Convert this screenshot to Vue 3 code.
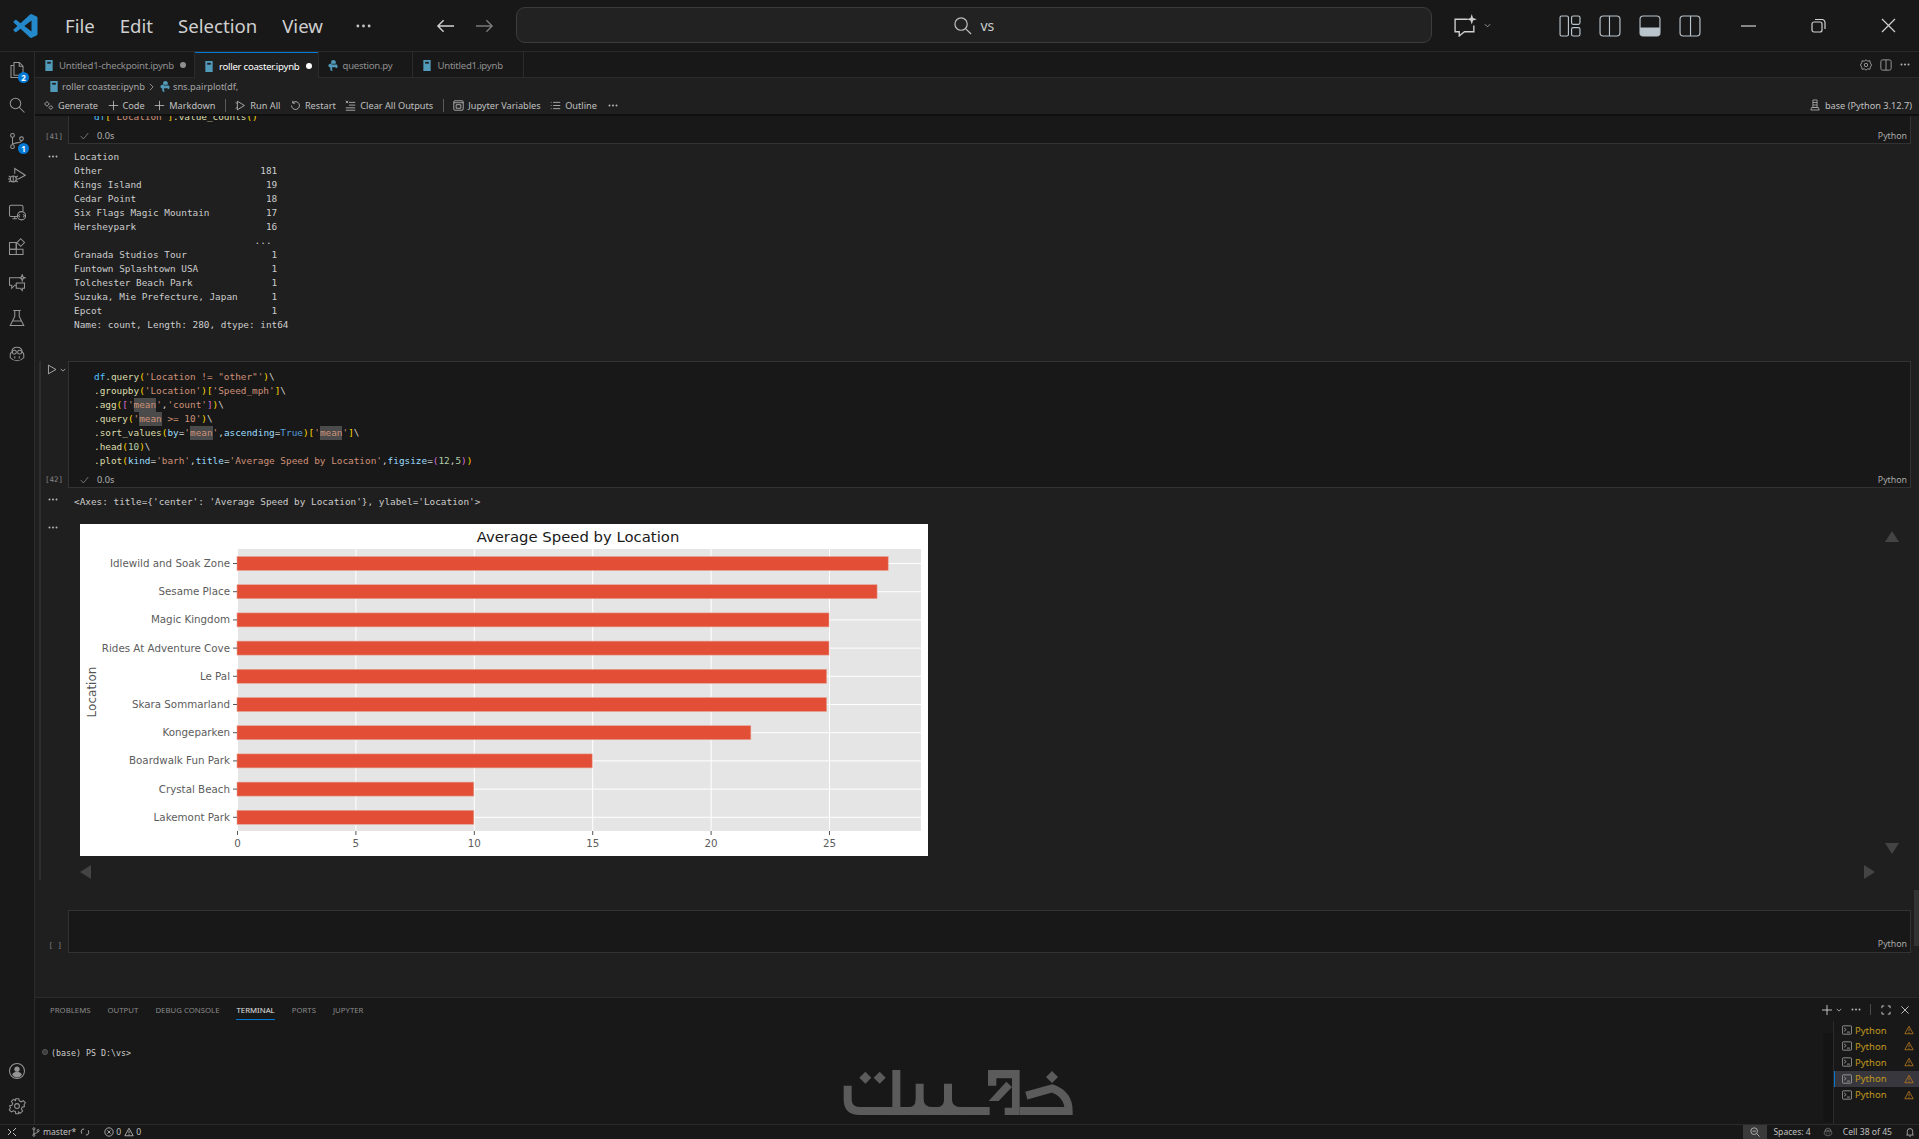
<template>
  <div class="window">
    <header class="titlebar">
      <svg class="logo" viewBox="0 0 24 24"><path fill="#2489ca" d="M23.15 2.587L18.21.21a1.494 1.494 0 0 0-1.705.29l-9.46 8.63-4.12-3.128a.999.999 0 0 0-1.276.057L.327 7.261A1 1 0 0 0 .326 8.74L3.899 12 .326 15.26a1 1 0 0 0 .001 1.479L1.65 17.94a.999.999 0 0 0 1.276.057l4.12-3.128 9.46 8.63a1.492 1.492 0 0 0 1.704.29l4.942-2.377A1.5 1.5 0 0 0 24 20.06V3.939a1.5 1.5 0 0 0-.85-1.352zm-5.146 14.861L10.826 12l7.178-5.448v10.896z"/></svg>
      <nav class="menu">
        <span>File</span><span>Edit</span><span>Selection</span><span>View</span>
      </nav>
      <svg class="dots-big" viewBox="0 0 16 4"><circle cx="2" cy="2" r="1.5"/><circle cx="8" cy="2" r="1.5"/><circle cx="14" cy="2" r="1.5"/></svg>
      <svg class="nav-arrow back" viewBox="0 0 20 16"><path d="M19 8H2M8 2L2 8l6 6"/></svg>
      <svg class="nav-arrow fwd" viewBox="0 0 20 16"><path d="M1 8h17M12 2l6 6-6 6"/></svg>
      <div class="search">
        <svg viewBox="0 0 20 20"><circle cx="8.5" cy="8.5" r="6.5"/><path d="M13.5 13.5L19 19"/></svg>
        <span>vs</span>
      </div>
      <svg class="chat-btn" viewBox="0 0 24 22"><path d="M14 5H2v12h4v4l5-4h9v-6"/><path class="solid" d="M18 0l1.2 3.8L23 5l-3.8 1.2L18 10l-1.2-3.8L13 5l3.8-1.2z"/></svg>
      <svg class="chev-mini" viewBox="0 0 8 5"><path d="M1 1l3 3 3-3"/></svg>
      <div class="layouts">
        <svg viewBox="0 0 21 21"><rect x="1" y="1" width="8" height="19" rx="1.5"/><rect x="12" y="1" width="8" height="8" rx="1.5"/><rect x="12" y="12" width="8" height="8" rx="1.5"/></svg>
        <svg viewBox="0 0 21 21"><rect x="1" y="1" width="19" height="19" rx="3"/><path d="M10 1v19"/></svg>
        <svg viewBox="0 0 21 21"><rect x="1" y="1" width="19" height="19" rx="3"/><path class="solid" d="M1 12h19v5a3 3 0 0 1-3 3H4a3 3 0 0 1-3-3z"/></svg>
        <svg viewBox="0 0 21 21"><rect x="1" y="1" width="19" height="19" rx="3"/><path d="M11 1v19"/></svg>
      </div>
      <svg class="win-btn min" viewBox="0 0 15 2"><path d="M0 1h15"/></svg>
      <svg class="win-btn restore" viewBox="0 0 15 15"><rect x="1" y="4" width="10" height="10" rx="2"/><path d="M4 1.5h7a3 3 0 0 1 3 3V11"/></svg>
      <svg class="win-btn close" viewBox="0 0 15 15"><path d="M1 1l13 13M14 1L1 14"/></svg>
    </header>

    <div class="body">
      <aside class="activity">
        <div v-for="item in activityTop" :key="item.name" class="act-slot">
          <svg viewBox="0 0 24 24" v-html="item.svg"></svg>
          <b v-if="item.badge" class="badge">{{ item.badge }}</b>
        </div>
        <div class="act-slot bottom-first">
          <svg viewBox="0 0 24 24"><circle cx="12" cy="12" r="10"/><circle cx="12" cy="9.5" r="3.5" class="solid"/><path class="solid" d="M5.5 17c1-3 4-4 6.5-4s5.5 1 6.5 4c-1.5 2-4 3.5-6.5 3.5S7 19 5.5 17z"/></svg>
        </div>
        <div class="act-slot">
          <svg viewBox="0 0 24 24"><circle cx="12" cy="12" r="3.2"/><path d="M10 2h4l.7 3 2.5 1.100 2.700-1.600 2.800 2.800-1.600 2.700L21.500 12.500l-3 .7-1 2.500 1.600 2.700-2.800 2.800-2.700-1.600L14 22h-4l-.7-3-2.500-1-2.700 1.600-2.800-2.800 1.600-2.700L1.800 11.500l3-.7 1-2.500-1.600-2.700 2.800-2.800 2.700 1.600z" transform="translate(.4 .3)"/></svg>
        </div>
      </aside>

      <main class="content">
        <div class="tabs">
          <div v-for="tab in tabs" :key="tab.name" class="tab" :class="{ active: tab.active }">
            <svg class="file-icon" viewBox="0 0 10 12" v-html="tab.py ? pyIcon : nbIcon"></svg>
            <span>{{ tab.name }}</span>
            <i class="dirty" :class="{ on: tab.dirty }"></i>
          </div>
          <div class="tab-actions">
            <svg viewBox="0 0 14 14"><circle cx="7" cy="7" r="2"/><path d="M7 1l2 1.5 2.500-.5.5 2.500L13.500 7 12 9.500l-.5 2.500L9 11.500 7 13l-2-1.500-2.500.5L2 9.500.5 7 2 4.500 2.500 2 5 2.500z"/></svg>
            <svg viewBox="0 0 14 14"><rect x="1" y="1" width="12" height="12" rx="2"/><path d="M7 1v12"/></svg>
            <svg class="dots" viewBox="0 0 10 3"><circle cx="1.5" cy="1.5" r="1"/><circle cx="5" cy="1.5" r="1"/><circle cx="8.5" cy="1.5" r="1"/></svg>
          </div>
        </div>

        <div class="crumbs">
          <svg class="file-icon" viewBox="0 0 10 12" v-html="nbIcon"></svg>
          <span>roller coaster.ipynb</span>
          <svg class="crumb-chev" viewBox="0 0 6 10"><path d="M1 1l4 4-4 4"/></svg>
          <svg class="file-icon" viewBox="0 0 10 12" v-html="pyIcon"></svg>
          <span>sns.pairplot(df,</span>
        </div>

        <div class="toolbar">
          <template v-for="item in toolbar" :key="item.label">
            <i v-if="item.sep" class="tool-sep"></i>
            <div v-else class="tool">
              <svg viewBox="0 0 14 14" v-html="item.svg"></svg>
              <span>{{ item.label }}</span>
            </div>
          </template>
          <svg class="dots tool-more" viewBox="0 0 10 3"><circle cx="1.5" cy="1.5" r="1"/><circle cx="5" cy="1.5" r="1"/><circle cx="8.5" cy="1.5" r="1"/></svg>
          <div class="kernel">
            <svg viewBox="0 0 12 14"><path d="M3.5 1h5v9h-5zM3.5 4h5M3.5 7h5M2 10h8l1 3H1z"/></svg>
            <span>base (Python 3.12.7)</span>
          </div>
        </div>

        <section class="notebook">
          <div class="cell cell-top">
            <div class="gutter"><span class="count">[41]</span></div>
            <div class="editor clipped">
              <pre class="code clipped-code"><span class="t-v">df</span><span class="t-p">[</span><span class="t-s">'Location'</span><span class="t-p">]</span><span class="t-f">.value_counts</span><span class="t-p">()</span></pre>
              <div class="exec">
                <svg viewBox="0 0 12 10"><path d="M1 5l3.5 4L11 1"/></svg>
                <span>0.0s</span>
                <em>Python</em>
              </div>
            </div>
          </div>

          <div class="out-block first-out">
            <svg class="dots out-dots" viewBox="0 0 10 3"><circle cx="1.5" cy="1.5" r="1"/><circle cx="5" cy="1.5" r="1"/><circle cx="8.5" cy="1.5" r="1"/></svg>
            <pre class="output">{{ countsOutput }}</pre>
          </div>

          <div class="focused">
            <div class="cell cell-main">
              <div class="gutter">
                <div class="run">
                  <svg viewBox="0 0 12 14"><path d="M1.5 1.5v11L11 7z"/></svg>
                  <svg class="run-chev" viewBox="0 0 8 5"><path d="M1 1l3 3 3-3"/></svg>
                </div>
                <span class="count">[42]</span>
              </div>
              <div class="editor">
                <pre class="code"><div v-for="(line, i) in codeLines" :key="i" class="code-line"><span v-for="(tok, j) in line" :key="j" :class="'t-' + tok[0]">{{ tok[1] }}</span></div></pre>
                <div class="exec">
                  <svg viewBox="0 0 12 10"><path d="M1 5l3.5 4L11 1"/></svg>
                  <span>0.0s</span>
                  <em>Python</em>
                </div>
              </div>
            </div>

            <div class="out-block axes-out">
              <svg class="dots out-dots" viewBox="0 0 10 3"><circle cx="1.5" cy="1.5" r="1"/><circle cx="5" cy="1.5" r="1"/><circle cx="8.5" cy="1.5" r="1"/></svg>
              <pre class="output">&lt;Axes: title={'center': 'Average Speed by Location'}, ylabel='Location'&gt;</pre>
            </div>

            <div class="out-block chart-out">
              <svg class="dots out-dots" viewBox="0 0 10 3"><circle cx="1.5" cy="1.5" r="1"/><circle cx="5" cy="1.5" r="1"/><circle cx="8.5" cy="1.5" r="1"/></svg>
              <svg class="chart" width="848" height="332" viewBox="0 0 848 332">
                <rect width="848" height="332" fill="#fff"/>
                <rect :x="plot.x" :y="plot.y" :width="plot.w" :height="plot.h" fill="#e5e5e5"/>
                <line v-for="t in ticks" :key="'g' + t" :x1="xPos(t)" :x2="xPos(t)" :y1="plot.y" :y2="plot.y + plot.h" stroke="#fff" stroke-width="1"/>
                <line v-for="b in bars" :key="'h' + b.name" :x1="plot.x" :x2="plot.x + plot.w" :y1="b.cy" :y2="b.cy" stroke="#fff" stroke-width="1"/>
                <g v-for="b in bars" :key="b.name">
                  <rect :x="plot.x" :y="b.cy - 7" :width="b.w" height="14" fill="#e24f36" stroke="#e5a598" stroke-width=".6"/>
                  <line :x1="plot.x - 4" :x2="plot.x" :y1="b.cy" :y2="b.cy" stroke="#555"/>
                  <text class="tick" :x="plot.x - 7" :y="b.cy + 3.5" text-anchor="end">{{ b.name }}</text>
                </g>
                <g v-for="t in ticks" :key="'t' + t">
                  <line :x1="xPos(t)" :x2="xPos(t)" :y1="plot.y + plot.h" :y2="plot.y + plot.h + 4" stroke="#555"/>
                  <text class="tick" :x="xPos(t)" y="323" text-anchor="middle">{{ t }}</text>
                </g>
                <text class="chart-title" x="498" y="18" text-anchor="middle">Average Speed by Location</text>
                <text class="axis-name" transform="translate(16 168) rotate(-90)" text-anchor="middle">Location</text>
              </svg>
              <i class="scroll-tri up"></i>
              <i class="scroll-tri down"></i>
              <i class="scroll-tri left"></i>
              <i class="scroll-tri right"></i>
            </div>
          </div>

          <div class="cell cell-empty">
            <div class="gutter"><span class="count">[ ]</span></div>
            <div class="editor"><em>Python</em></div>
          </div>
          <i class="nb-scroll"></i>
        </section>

        <section class="panel">
          <div class="panel-main">
            <div class="panel-tabs">
              <span v-for="name in panelTabs" :key="name" :class="{ current: name === 'TERMINAL' }">{{ name }}</span>
            </div>
            <div class="terminal">
              <i class="term-dot"></i>
              <pre>(base) PS D:\vs&gt;</pre>
            </div>
          </div>
          <i class="term-ruler"></i>
          <div class="panel-side">
            <div class="panel-actions">
              <svg class="plus" viewBox="0 0 12 12"><path d="M6 0v12M0 6h12"/></svg>
              <svg class="act-chev" viewBox="0 0 8 5"><path d="M1 1l3 3 3-3"/></svg>
              <svg class="dots" viewBox="0 0 10 3"><circle cx="1.5" cy="1.5" r="1"/><circle cx="5" cy="1.5" r="1"/><circle cx="8.5" cy="1.5" r="1"/></svg>
              <i class="act-sep"></i>
              <svg class="act-icon" viewBox="0 0 11 11"><path d="M1 3.5V1h2.500M7.500 1H10v2.500M10 7.500V10H7.500M3.500 10H1V7.500"/></svg>
              <svg class="act-icon" viewBox="0 0 11 11"><path d="M1.5 1.500l8 8M9.500 1.500l-8 8"/></svg>
            </div>
            <div class="term-list">
              <div v-for="n in 5" :key="n" class="term-row" :class="{ selected: n === 4 }">
                <svg class="term-icon" viewBox="0 0 12 12"><rect x=".5" y="1" width="11" height="10" rx="1"/><path d="M2.500 3.500l2.500 2-2.500 2M6 8.500h3.500"/></svg>
                <span>Python</span>
                <svg class="warn-icon" viewBox="0 0 12 11"><path d="M6 1l5 9H1zM6 4v3M6 8v1"/></svg>
              </div>
            </div>
          </div>
        </section>
      </main>
    </div>

    <footer class="status">
      <div class="st-left">
        <svg class="st-remote" viewBox="0 0 10 10"><path d="M1 2l3 3-3 3M9 1L6 4M6 6l3 3"/></svg>
        <svg class="st-branch" viewBox="0 0 12 14"><circle cx="3" cy="2.5" r="1.5"/><circle cx="3" cy="11.5" r="1.5"/><circle cx="9" cy="5" r="1.5"/><path d="M3 4v6M9 6.500c0 2.500-6 1.500-6 3.500"/></svg>
        <span class="st-master">master*</span>
        <svg class="st-sync" viewBox="0 0 12 12"><path d="M2 8a4.500 4.500 0 0 1 1-5.500l2 .1M10 4a4.500 4.500 0 0 1-1 5.500l-2-.1"/></svg>
        <svg class="st-err" viewBox="0 0 12 12"><circle cx="6" cy="6" r="5"/><path d="M4 4l4 4M8 4l-4 4"/></svg>
        <span>0</span>
        <svg class="st-warn" viewBox="0 0 12 11"><path d="M6 1l5 9H1zM6 4v3M6 8v1"/></svg>
        <span>0</span>
      </div>
      <div class="st-right">
        <div class="st-zoom"><svg viewBox="0 0 12 12"><circle cx="5" cy="5" r="4"/><path d="M3 5h4M8 8l3.500 3.500"/></svg></div>
        <span class="st-spaces">Spaces: 4</span>
        <svg class="st-copilot" viewBox="0 0 24 24" v-html="copilotIcon"></svg>
        <span class="st-cell">Cell 38 of 45</span>
        <svg class="st-bell" viewBox="0 0 12 13"><path d="M2.500 9.500V5.500a3.500 3.500 0 0 1 7 0v4l1 1h-9zM5 12h2"/></svg>
      </div>
    </footer>

    <!-- site watermark on top of the terminal -->
    <svg class="watermark" viewBox="0 0 720 168">
      <g fill="none" stroke="#5b5b5b" stroke-width="24">
        <path d="M29 62V103Q29 138 65 138H455"/>
        <path d="M175 15V150"/>
        <path d="M245 56V104Q245 138 212 138"/>
        <path d="M245 104Q245 138 285 138"/>
        <path d="M330 56V104Q330 138 296 138"/>
        <path d="M330 104Q330 138 370 138"/>
        <path d="M545 138H692Q692 88 642 70L565 92"/>
      </g>
      <path fill="#5b5b5b" d="M82 20l18 18-18 18-18-18zM125 20l18 18-18 18-18-18zM642 18l18 18-18 18-18-18z"/>
      <path fill="#5b5b5b" d="M450 15H545V150H500V128H522V40H475V62H450zM505 50L522 66 482 108H452z"/>
    </svg>
  </div>
</template>

<script setup>
const nbIcon = '<path fill="#519aba" d="M1 0h8v12H1z"/><path fill="#1f1f1f" d="M3 2h4v2H3z"/>'
const pyIcon = '<path fill="#519aba" d="M5 0c2 0 3 1 3 2v2H3.500v1H9c1 0 1 2 1 2s0 2-2 2V8H4v2c0 1.500 1 2 1 2-2 0-3-1-3-2V8H1S0 7 0 6s1-2 2-2h1V2c0-1 1-2 2-2z"/>'
const copilotIcon = '<path d="M3 13c0-2 1-3 2-3 0-5 3-7 7-7s7 2 7 7c1 0 2 1 2 3v4c-3 3-6 4-9 4s-6-1-9-4z"/><rect x="6" y="7" width="5" height="5" rx="2"/><rect x="13" y="7" width="5" height="5" rx="2"/><path d="M9 15v3M15 15v3"/>'

const activityTop = [
  { name: 'files', badge: 2, svg: '<path d="M8 2h7l5 5v12H8z"/><path d="M15 2v5h5"/><path d="M8 6H4v16h12v-3"/>' },
  { name: 'search', svg: '<circle cx="10" cy="10" r="7"/><path d="M15 15l7 7"/>' },
  { name: 'git', badge: 1, svg: '<circle cx="6" cy="4.5" r="2.5"/><circle cx="6" cy="19.5" r="2.5"/><circle cx="18" cy="9" r="2.5"/><path d="M6 7v10M18 11.500c0 4-12 2-12 5.500"/>' },
  { name: 'debug', svg: '<path d="M9 9V2l14 9-9 5"/><circle cx="7" cy="16" r="4"/><path d="M1 12l3 2M1 20l3-2M13 12l-3 2M13 20l-3-2M0 16h3M11 16h3M7 12v8"/>' },
  { name: 'remote', svg: '<path d="M13 18H4a2 2 0 0 1-2-2V5a2 2 0 0 1 2-2h14a2 2 0 0 1 2 2v6"/><path d="M6 21h6M9 18v3"/><circle cx="18" cy="17" r="5.5"/><path d="M16 15l-2 2 2 2M20 15l2 2-2 2"/>' },
  { name: 'extensions', svg: '<path d="M2 6h9v9h9v7H2zM2 15h9v7"/><path d="M11 6v9H2"/><path d="M17 1l5 5-5 5-5-5z"/>' },
  { name: 'chat', svg: '<path d="M14 5H2v10h3v4l4-4h2"/><path d="M11 12h11v7h-3v3l-3-3h-5z"/><path class="solid" d="M19 1l1 3 3 1-3 1-1 3-1-3-3-1 3-1z"/>' },
  { name: 'test', svg: '<path d="M7 2h10M9 2v8L3 22h18l-6-12V2M6 16h12"/>' },
  { name: 'copilot', svg: copilotIcon }
]

const tabs = [
  { name: 'Untitled1-checkpoint.ipynb', dirty: true },
  { name: 'roller coaster.ipynb', dirty: true, active: true },
  { name: 'question.py', py: true },
  { name: 'Untitled1.ipynb' }
]

const toolbar = [
  { label: 'Generate', svg: '<path d="M5 2l3 3-3 3-3-3zM10 7l2.500 2.500L10 12 7.500 9.500z"/>' },
  { label: 'Code', svg: '<path d="M7 1v12M1 7h12"/>' },
  { label: 'Markdown', svg: '<path d="M7 1v12M1 7h12"/>' },
  { sep: true, label: 's1' },
  { label: 'Run All', svg: '<path d="M3 1.500v11L12 7zM3 5L1 3M3 9l-2 2"/>' },
  { label: 'Restart', svg: '<path d="M3.500 3.500A5 5 0 1 1 2 7M3.500 1v3h3"/>' },
  { label: 'Clear All Outputs', svg: '<path d="M5 3h8M5 6.500h8M1 10h12M1 13h12M1 1l3 3M4 1L1 4"/>' },
  { sep: true, label: 's2' },
  { label: 'Jupyter Variables', svg: '<rect x="1" y="1" width="12" height="12" rx="1.500"/><path d="M1 3.500h12M4 6v4.500M10 6v4.500M4 6h6M4 10.500h6"/>' },
  { label: 'Outline', svg: '<path d="M4 3h9M4 7h9M4 11h9M1 3h1M1 7h1M1 11h1"/>' }
]

const countsOutput = `Location
Other                            181
Kings Island                      19
Cedar Point                       18
Six Flags Magic Mountain          17
Hersheypark                       16
                                ... 
Granada Studios Tour               1
Funtown Splashtown USA             1
Tolchester Beach Park              1
Suzuka, Mie Prefecture, Japan      1
Epcot                              1
Name: count, Length: 280, dtype: int64`

const codeLines = [
  [['v', 'df'], ['f', '.query'], ['p', '('], ['s', `'Location != "other"'`], ['p', ')'], ['x', '\\']],
  [['f', '.groupby'], ['p', '('], ['s', "'Location'"], ['p', ')['], ['s', "'Speed_mph'"], ['p', ']'], ['x', '\\']],
  [['f', '.agg'], ['p', '('], ['o', '['], ['s', "'"], ['m', 'mean'], ['s', "'"], ['x', ','], ['s', "'count'"], ['o', ']'], ['p', ')'], ['x', '\\']],
  [['f', '.query'], ['p', '('], ['s', "'"], ['m', 'mean'], ['s', " >= 10'"], ['p', ')'], ['x', '\\']],
  [['f', '.sort_values'], ['p', '('], ['k', 'by'], ['x', '='], ['s', "'"], ['m', 'mean'], ['s', "'"], ['x', ','], ['k', 'ascending'], ['x', '='], ['c', 'True'], ['p', ')['], ['s', "'"], ['m', 'mean'], ['s', "'"], ['p', ']'], ['x', '\\']],
  [['f', '.head'], ['p', '('], ['n', '10'], ['p', ')'], ['x', '\\']],
  [['f', '.plot'], ['p', '('], ['k', 'kind'], ['x', '='], ['s', "'barh'"], ['x', ','], ['k', 'title'], ['x', '='], ['s', "'Average Speed by Location'"], ['x', ','], ['k', 'figsize'], ['x', '='], ['o', '('], ['n', '12'], ['x', ','], ['n', '5'], ['o', ')'], ['p', ')']]
]

const panelTabs = ['PROBLEMS', 'OUTPUT', 'DEBUG CONSOLE', 'TERMINAL', 'PORTS', 'JUPYTER']

// plot area inside the figure, measured from the figure's top-left corner
const plot = { x: 157, y: 25, w: 684, h: 282 }
const unit = 23.68
const xPos = (v) => plot.x + v * unit + 0.5
const ticks = [0, 5, 10, 15, 20, 25]

const speeds = [
  ['Idlewild and Soak Zone', 27.5],
  ['Sesame Place', 27.03],
  ['Magic Kingdom', 25],
  ['Rides At Adventure Cove', 25],
  ['Le Pal', 24.9],
  ['Skara Sommarland', 24.9],
  ['Kongeparken', 21.7],
  ['Boardwalk Fun Park', 15],
  ['Crystal Beach', 10],
  ['Lakemont Park', 10]
]
const bars = speeds.map(([name, v], i) => ({
  name,
  w: v * unit,
  cy: 39.5 + i * 28.2
}))
</script>

<style>
html, body { margin: 0; background: #181818; }
</style>

<style scoped>
.window {
  position: relative;
  width: 1919px;
  height: 1139px;
  overflow: hidden;
  display: flex;
  flex-direction: column;
  background: #181818;
  color: #cccccc;
  font-family: "Noto Sans", "Open Sans", sans-serif;
}
svg { fill: none; stroke: currentColor; stroke-width: 1; flex: none; }
pre { margin: 0; font-family: "DejaVu Sans Mono", monospace; font-size: 9.4px; line-height: 14px; }
.solid { fill: currentColor; stroke: none; }
.dots { width: 10px; height: 3px; fill: currentColor; stroke: none; color: #b5b5b5; }

/* title bar */
.titlebar {
  height: 52px;
  flex: none;
  display: flex;
  align-items: center;
  box-sizing: border-box;
  border-bottom: 1px solid #2b2b2b;
  padding-left: 13px;
}
.logo { width: 25px; height: 24px; stroke: none; }
.menu { display: flex; gap: 25px; margin-left: 27px; font-size: 18.6px; color: #cfcfcf; }
.dots-big { width: 15px; height: 4px; margin-left: 33px; fill: #c5c5c5; stroke: none; }
.nav-arrow { width: 19px; height: 16px; stroke-width: 1.5; }
.nav-arrow.back { margin-left: 65px; color: #d0d0d0; }
.nav-arrow.fwd { margin-left: 20px; color: #7a7a7a; }
.search {
  width: 916px;
  height: 36px;
  box-sizing: border-box;
  margin-left: 22px;
  margin-bottom: 1px;
  display: flex;
  align-items: center;
  justify-content: center;
  gap: 8px;
  background: #222222;
  border: 1px solid #3c3c3c;
  border-radius: 9px;
  font-size: 14px;
  color: #cccccc;
}
.search svg { width: 19px; height: 19px; stroke-width: 1.3; color: #bdbdbd; }
.chat-btn { width: 25px; height: 23px; margin-left: 21px; stroke-width: 1.3; color: #cfcfcf; }
.chev-mini { width: 7px; height: 5px; margin-left: 6px; color: #b0a0a0; }
.layouts { display: flex; gap: 18px; margin-left: 68px; color: #b9c4cc; }
.layouts svg { width: 22px; height: 22px; stroke-width: 1.1; }
.win-btn { color: #d0d0d0; stroke-width: 1.2; }
.win-btn.min { width: 15px; height: 2px; margin-left: 40px; }
.win-btn.restore { width: 15px; height: 15px; margin-left: 55px; }
.win-btn.close { width: 15px; height: 15px; margin-left: 55px; }

/* main split */
.body { flex: 1; display: flex; min-height: 0; }
.activity {
  width: 35px;
  flex: none;
  box-sizing: border-box;
  border-right: 1px solid #2b2b2b;
  display: flex;
  flex-direction: column;
}
.act-slot {
  position: relative;
  height: 35.5px;
  flex: none;
  display: flex;
  align-items: center;
  justify-content: center;
  color: #959595;
}
.act-slot svg { width: 18px; height: 18px; stroke-width: 1.4; }
.bottom-first { margin-top: auto; }
.badge {
  position: absolute;
  left: 18px;
  top: 20px;
  width: 11px;
  height: 11px;
  border-radius: 50%;
  background: #0078d4;
  color: #fff;
  font-size: 8px;
  line-height: 11px;
  text-align: center;
}
.content { flex: 1; min-width: 0; display: flex; flex-direction: column; }

/* tabs */
.tabs { height: 26px; flex: none; display: flex; border-bottom: 1px solid #2b2b2b; box-sizing: border-box; }
.tab {
  display: flex;
  align-items: center;
  height: 100%;
  box-sizing: border-box;
  padding: 1px 5px 0 9px;
  gap: 5px;
  font-size: 9.6px;
  letter-spacing: -.25px;
  color: #8f8f8f;
  border-right: 1px solid #2b2b2b;
}
.tab.active { color: #fff; background: #1f1f1f; box-shadow: inset 0 1px 0 #0078d4; height: 27px; padding-right: 3px; }
.file-icon { width: 10px; height: 11px; stroke: none; }
.dirty { width: 6px; height: 6px; margin-left: 1px; margin-right: 3px; border-radius: 50%; }
.dirty.on { background: #8f8f8f; }
.tab.active .dirty.on { background: #fff; }
.tab-actions { margin-left: auto; display: flex; align-items: center; gap: 8px; padding-right: 9px; color: #a9a9a9; }
.tab-actions svg:not(.dots) { width: 12px; height: 12px; }

.crumbs {
  height: 17px;
  flex: none;
  display: flex;
  align-items: center;
  padding-left: 14px;
  gap: 3px;
  font-size: 9.3px;
  color: #a6a6a6;
  background: #1f1f1f;
}
.crumb-chev { width: 5px; height: 8px; margin: 0 3px 0 1px; color: #aaa; }

.toolbar {
  height: 18px;
  padding-top: 1px;
  flex: none;
  display: flex;
  align-items: center;
  padding-left: 8px;
  gap: 9.5px;
  background: #1f1f1f;
  border-bottom: 2px solid #101010;
  box-sizing: content-box;
  font-size: 9.2px;
  color: #c0c0c0;
}
.tool { display: flex; align-items: center; gap: 4px; }
.tool svg { width: 11px; height: 11px; color: #c8c8c8; }
.tool-sep { width: 1px; height: 13px; background: #5a5a5a; }
.tool-more { margin-left: 2px; }
.kernel { margin-left: auto; padding-right: 7px; display: flex; align-items: center; gap: 5px; }
.kernel svg { width: 10px; height: 12px; color: #b0b0b0; }

/* notebook */
.notebook {
  position: relative;
  flex: 1;
  min-height: 0;
  overflow: hidden;
  background: #1f1f1f;
}
.cell { display: flex; }
.gutter {
  position: relative;
  width: 33px;
  flex: none;
}
.count {
  position: absolute;
  right: 5px;
  font-family: "DejaVu Sans Mono", monospace;
  font-size: 7.5px;
  color: #858585;
}
.editor {
  position: relative;
  flex: 1;
  margin-right: 8px;
  background: #181818;
  border: 1px solid #333333;
  box-sizing: border-box;
}
.exec {
  position: absolute;
  left: 11px;
  right: 3px;
  bottom: -1px;
  height: 17px;
  display: flex;
  align-items: center;
  gap: 8px;
  font-size: 9.2px;
  color: #b0b0b0;
}
.exec svg { width: 9px; height: 8px; color: #8f8f8f; }
.exec em { margin-left: auto; font-style: normal; font-size: 8.8px; color: #a8a8a8; }
.code { padding-left: 25px; }
.code-line { height: 14px; }

.cell-top { height: 28px; }
.cell-top .count { bottom: 3px; }
.clipped { border-top: none; background: #181818; overflow: hidden; }
.clipped-code { position: absolute; top: -6px; left: 0; }
.t-v { color: #4fc1ff; }
.t-f { color: #dcdcaa; }
.t-p { color: #ffd700; }
.t-o { color: #da70d6; }
.t-s { color: #ce9178; }
.t-m { display: inline-block; color: #ce9178; background: #4b4b4b; }
.t-k { color: #9cdcfe; }
.t-c { color: #569cd6; }
.t-n { color: #b5cea8; }
.t-x { color: #d4d4d4; }

.out-block { position: relative; display: block; }
.out-dots { position: absolute; left: 13px; top: 11px; }
.output { padding-left: 39px; color: #cccccc; }
.first-out { height: 217px; box-sizing: border-box; padding-top: 6px; }

.focused { margin-left: 4px; border-left: 2px solid #2d2d2d; }
.cell-main { height: 127px; }
.cell-main .gutter { width: 27px; }
.cell-main .code { padding-top: 8px; }
.cell-main .count { top: 114px; }
.run { position: absolute; left: 6px; top: 3px; display: flex; align-items: center; gap: 3px; color: #c5c5c5; }
.run svg { width: 10px; height: 11px; }
.run .run-chev { width: 6px; height: 4px; }

.axes-out { height: 27px; box-sizing: border-box; padding-top: 7px; }
.axes-out .out-dots { left: 7px; top: 10px; }
.axes-out .output { padding-left: 33px; }
.chart-out { height: 365px; box-sizing: border-box; padding: 9px 0 0 39px; }
.chart-out .out-dots { left: 7px; top: 11px; }
.chart { display: block; stroke: none; font-family: "DejaVu Sans", sans-serif; }
.tick { font-size: 10.3px; fill: #5c5c5c; }
.chart-title { font-size: 14.85px; fill: #1a1a1a; }
.axis-name { font-size: 12px; fill: #555555; }

.scroll-tri { position: absolute; width: 0; height: 0; border-style: solid; border-color: transparent; }
.scroll-tri.up { left: 1844px; top: 16px; border-width: 0 7px 11px; border-bottom-color: #444; }
.scroll-tri.down { left: 1844px; top: 328px; border-width: 11px 7px 0; border-top-color: #444; }
.scroll-tri.left { left: 39px; top: 350px; border-width: 7px 11px 7px 0; border-right-color: #444; }
.scroll-tri.right { left: 1823px; top: 350px; border-width: 7px 0 7px 11px; border-left-color: #444; }

.cell-empty { height: 43px; margin-top: 30px; }
.cell-empty .count { bottom: 3px; right: 6px; }
.cell-empty em {
  position: absolute;
  right: 3px;
  bottom: 2px;
  font-style: normal;
  font-size: 8.8px;
  color: #a8a8a8;
}
.nb-scroll { position: absolute; right: 0; top: 774px; width: 5px; height: 56px; background: #333333; }

/* panel */
.panel {
  height: 127px;
  flex: none;
  display: flex;
  box-sizing: border-box;
  border-top: 1px solid #2b2b2b;
}
.panel-main { flex: 1; min-width: 0; }
.panel-tabs { display: flex; gap: 17px; padding: 7px 0 0 15px; font-size: 7.8px; color: #8a8a8a; }
.panel-tabs span { line-height: 11px; padding-bottom: 3px; }
.panel-tabs .current { color: #e0e0e0; box-shadow: 0 1px 0 #0078d4; }
.terminal { position: relative; margin-top: 28px; padding-left: 16px; }
.terminal pre { font-size: 8.3px; line-height: 12px; color: #cccccc; }
.term-dot {
  position: absolute;
  left: 7px;
  top: 2px;
  width: 4px;
  height: 4px;
  border-radius: 50%;
  border: 1px solid #5a5a5a;
  background: #3a3a3a;
}
.term-ruler { width: 10px; margin: 35px 0 2px; background: #141414; }
.panel-side { width: 86px; flex: none; position: relative; }
.panel-actions {
  position: absolute;
  right: 9px;
  top: 6px;
  display: flex;
  align-items: center;
  color: #cccccc;
}
.plus { width: 10px; height: 10px; color: #e0e0e0; }
.act-chev { width: 6px; height: 4px; margin-left: 4px; }
.panel-actions .dots { margin-left: 9px; }
.act-sep { width: 1px; height: 11px; background: #4a4a4a; margin: 0 10px 0 9px; }
.act-icon { width: 10px; height: 10px; }
.act-icon + .act-icon { margin-left: 9px; }
.term-list {
  margin-top: 23px;
  height: 103px;
  box-sizing: border-box;
  border-left: 1px solid #2b2b2b;
  padding-top: 1px;
}
.term-row {
  position: relative;
  height: 16.2px;
  display: flex;
  align-items: center;
  padding-left: 8px;
  font-size: 9.5px;
  color: #c09a1e;
}
.term-row span { margin-left: 3px; }
.term-row.selected { background: #37373d; box-shadow: inset 1px 0 0 #0078d4; }
.term-icon { width: 10px; height: 10px; color: #a5a5a5; }
.warn-icon { position: absolute; right: 5px; width: 10px; height: 10px; color: #b87a1e; }

/* status bar */
.status {
  height: 15px;
  flex: none;
  display: flex;
  justify-content: space-between;
  box-sizing: border-box;
  border-top: 1px solid #2b2b2b;
  font-size: 8.6px;
  color: #c0c0c0;
}
.st-left, .st-right { display: flex; align-items: center; height: 100%; }
.st-left svg, .st-right svg { width: 10px; height: 10px; }
.st-remote { margin-left: 7px; }
.st-branch { margin-left: 14px; }
.st-master { margin-left: 2px; }
.st-sync { margin-left: 4px; }
.st-err { margin-left: 14px; }
.st-err + span { margin-left: 2px; }
.st-warn { margin-left: 3px; }
.st-warn + span { margin-left: 2px; }
.st-zoom { width: 24px; height: 100%; display: flex; align-items: center; justify-content: center; background: #3a3a3a; }
.st-spaces { margin-left: 6px; }
.st-copilot { margin-left: 12px; }
.st-cell { margin-left: 10px; }
.st-bell { margin-left: 13px; margin-right: 4px; }

.watermark { position: absolute; left: 838px; top: 1065px; width: 240px; height: 56px; stroke: none; }
</style>
